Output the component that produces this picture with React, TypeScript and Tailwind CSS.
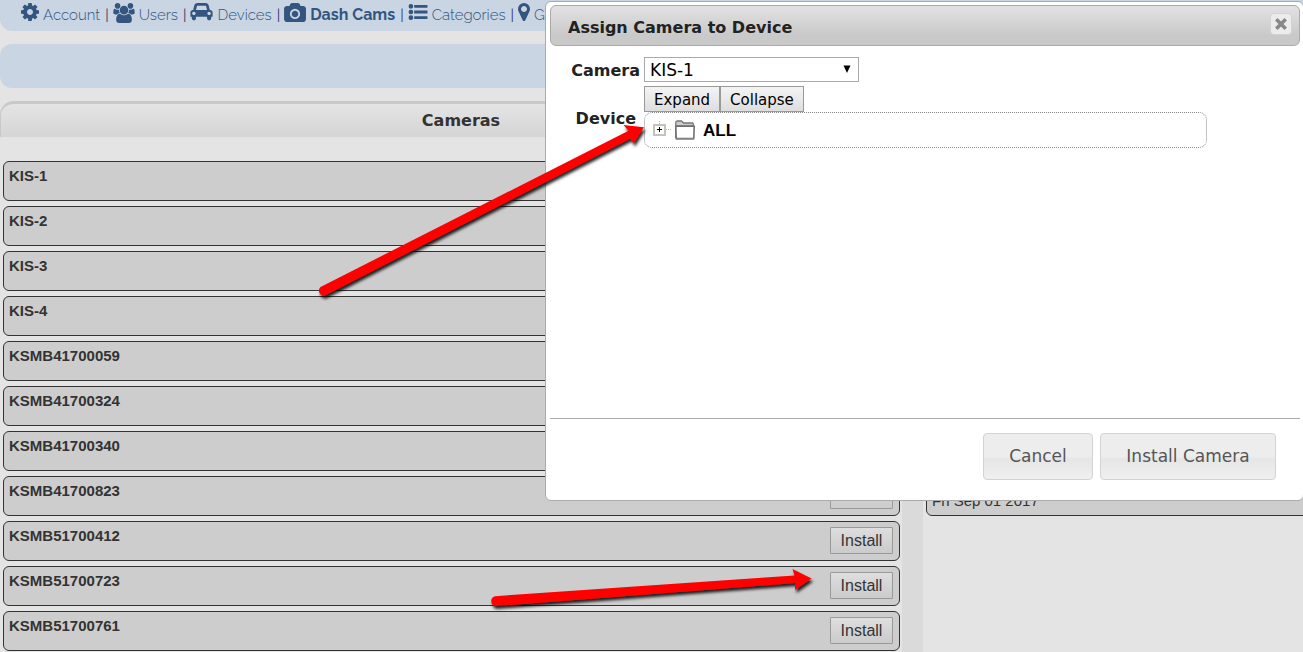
import React from "react";

type IconProps = { box: string; className: string; d: string };

function Icon({ box, className, d }: IconProps) {
  return (
    <svg viewBox={box} className={className} fill="currentColor" aria-hidden="true">
      <path d={d} />
    </svg>
  );
}

const COG =
  "M1152 896q0-106-75-181t-181-75-181 75-75 181 75 181 181 75 181-75 75-181zm512-109v222q0 12-8 23t-20 13l-185 28q-19 54-39 91 35 50 107 138 10 12 10 25t-9 23q-27 37-99 108t-94 71q-12 0-26-9l-138-108q-44 23-91 38-16 136-29 186-7 28-36 28h-222q-14 0-24.5-8.5t-11.5-21.5l-28-184q-49-16-90-37l-141 107q-10 9-25 9-14 0-25-11-126-114-165-168-7-10-7-23 0-12 8-23 15-21 51-66.5t54-70.5q-27-50-41-99l-183-27q-13-2-21-12.5t-8-23.5v-222q0-12 8-23t19-13l186-28q14-46 39-92-40-57-107-138-10-12-10-24 0-10 9-23 26-36 98.5-107.5t94.5-71.5q13 0 26 10l138 107q44-23 91-38 16-136 29-186 7-28 36-28h222q14 0 24.5 8.5t11.5 21.5l28 184q49 16 90 37l142-107q9-9 24-9 13 0 25 10 129 119 165 170 7 8 7 22 0 12-8 23-15 21-51 66.5t-54 70.5q26 50 41 98l183 28q13 2 21 12.5t8 23.5z";
const USERS =
  "M529 896q-162 5-265 128h-134q-82 0-138-40.5t-56-118.5q0-353 124-353 6 0 43.5 21t97.5 42.5 119 21.5q67 0 133-23-5 37-5 66 0 143 81 256zm1071 637q0 120-73 189.5t-194 69.5h-874q-121 0-194-69.5t-73-189.5q0-53 3.5-103.5t14-109 26.5-108.5 43-97.5 62-81 85.5-53.5 111.5-20q10 0 43 21.5t73 48 107 48 135 21.5 135-21.5 107-48 73-48 43-21.5q61 0 111.5 20t85.5 53.5 62 81 43 97.5 26.5 108.5 14 109 3.5 103.5zm-1024-1277q0 106-75 181t-181 75-181-75-75-181 75-181 181-75 181 75 75 181zm704 384q0 159-112.5 271.5t-271.5 112.5-271.5-112.5-112.5-271.5 112.5-271.5 271.5-112.5 271.5 112.5 112.5 271.5zm576 225q0 78-56 118.5t-138 40.5h-134q-103-123-265-128 81-113 81-256 0-29-5-66 66 23 133 23 59 0 119-21.5t97.5-42.5 43.5-21q124 0 124 353zm-128-609q0 106-75 181t-181 75-181-75-75-181 75-181 181-75 181 75 75 181z";
const CAR =
  "M480 1088q0-66-47-113t-113-47-113 47-47 113 47 113 113 47 113-47 47-113zm36-320h1016l-89-357q-2-8-14-17.5t-21-9.5h-768q-9 0-21 9.5t-14 17.5zm1372 320q0-66-47-113t-113-47-113 47-47 113 47 113 113 47 113-47 47-113zm160-96v384q0 14-9 23t-23 9h-96v128q0 80-56 136t-136 56-136-56-56-136v-128h-1024v128q0 80-56 136t-136 56-136-56-56-136v-128h-96q-14 0-23-9t-9-23v-384q0-93 65.5-158.5t158.5-65.5h28l105-419q23-94 104-157.5t179-63.5h768q98 0 179 63.5t104 157.5l105 419h28q93 0 158.5 65.5t65.5 158.5z";
const CAMERA =
  "M896 672q119 0 203.5 84.5t84.5 203.5-84.5 203.5-203.5 84.5-203.5-84.5-84.5-203.5 84.5-203.5 203.5-84.5zm704-416q106 0 181 75t75 181v896q0 106-75 181t-181 75h-1408q-106 0-181-75t-75-181v-896q0-106 75-181t181-75h224l51-136q19-49 69.5-84.5t103.5-35.5h512q53 0 103.5 35.5t69.5 84.5l51 136h224zm-704 1152q185 0 316.5-131.5t131.5-316.5-131.5-316.5-316.5-131.5-316.5 131.5-131.5 316.5 131.5 316.5 316.5 131.5z";
const LIST =
  "M0 3.5a2.5 2.5 0 1 1 5 0a2.5 2.5 0 1 1-5 0zM0 9.500a2.500 2.500 0 1 1 5 0a2.500 2.500 0 1 1-5 0zM0 15.500a2.500 2.500 0 1 1 5 0a2.500 2.500 0 1 1-5 0zM6 2h14v3h-14zM6 8h14v3h-14zM6 14h14v3h-14z";
const PIN =
  "M1152 640q0-106-75-181t-181-75-181 75-75 181 75 181 181 75 181-75 75-181zm256 0q0 109-33 179l-364 774q-16 33-47.5 52t-67.5 19-67.5-19-46.5-52l-365-774q-33-70-33-179 0-212 150-362t362-150 362 150 150 362z";

const NAV = [
  { label: "Account", box: "128 128 1536 1536", size: "h-[18px] w-[18px]", d: COG },
  { label: "Users", box: "-64 0 1920 1792", size: "h-5 w-[22px]", d: USERS },
  { label: "Devices", box: "0 128 2048 1664", size: "h-[18px] w-[23px]", d: CAR },
  { label: "Dash Cams", box: "-64 0 1920 1664", size: "h-[19px] w-[22px]", d: CAMERA, active: true },
  { label: "Categories", box: "0 0 20 19", size: "h-[18px] w-5", d: LIST },
  { label: "Geo", box: "384 128 1024 1536", size: "h-[18px] w-3", d: PIN },
];

const CAMERAS = [
  "KIS-1",
  "KIS-2",
  "KIS-3",
  "KIS-4",
  "KSMB41700059",
  "KSMB41700324",
  "KSMB41700340",
  "KSMB41700823",
  "KSMB51700412",
  "KSMB51700723",
  "KSMB51700761",
];

function PanelHeader({ children }: { children?: React.ReactNode }) {
  return (
    <h2 className="h-9 rounded-t-[14px] border-x border-t-[3px] border-[#c9c9c9] bg-linear-to-b from-[#e4e4e4] to-[#d5d5d5] text-center font-['DejaVu_Sans',sans-serif] text-base leading-[34px] font-bold text-[#333]">
      {children}
    </h2>
  );
}

function CameraRow({ name }: { name: string }) {
  return (
    <li className="flex h-10 items-start justify-between rounded-md border border-[#333] bg-[#cdcdcd] pt-[5px] pr-1.5 pl-[5px]">
      <span className="text-[15px] leading-[18px] font-bold text-[#333]">{name}</span>
      <button
        type="button"
        className="h-[27px] w-[63px] rounded-[1px] border border-[#999] bg-linear-to-b from-[#dedede] to-[#cbcbcb] text-base leading-6 text-[#333]"
      >
        Install
      </button>
    </li>
  );
}

function AssignDialog() {
  const dialogButton =
    "h-[47px] rounded border border-[#d3d3d3] bg-linear-to-b from-[#ededed] from-50% via-[#e6e6e6] via-55% to-[#f0f0f0] text-[17px] text-[#555]";
  const treeButton =
    "h-[26px] border border-[#999] bg-linear-to-b from-[#f4f4f4] to-[#dedede] px-[9px] pt-0.5 text-[15px] leading-[22px] text-black";
  return (
    <section
      role="dialog"
      aria-labelledby="dialog-title"
      className="absolute top-px -right-px flex h-[500px] w-[759px] flex-col rounded-md border border-[#aaa] bg-white px-1 pt-[3px] font-['DejaVu_Sans',sans-serif] text-[#222]"
    >
      <header className="-mr-px flex h-[41px] shrink-0 items-center justify-between rounded-md border border-[#aaa] bg-linear-to-b from-[#e2e2e2] to-[#c9c9c9] to-75% pr-[7px] pl-[17px]">
        <h1 id="dialog-title" className="pt-1 text-base font-bold">
          Assign Camera to Device
        </h1>
        <button
          type="button"
          aria-label="Close"
          className="mb-[3px] flex size-[22px] items-center justify-center rounded border border-[#d3d3d3] bg-[#ececec]"
        >
          <svg viewBox="0 0 12 12" className="size-3" stroke="#888" strokeWidth="3.6" aria-hidden="true">
            <path d="M1.300 1.300L10.700 10.700M10.700 1.300L1.300 10.700" />
          </svg>
        </button>
      </header>

      <form className="grid grow grid-cols-[94px_1fr] content-start pt-[11px] pr-[92px]">
        <label htmlFor="camera" className="pr-1 text-right text-base leading-7 font-bold">
          Camera
        </label>
        <div className="relative mb-px h-7 w-[215px]">
          <select
            id="camera"
            className="h-[25px] w-full appearance-none border border-[#a9a9a9] bg-white px-[5px] pt-px text-[17px] leading-[22px] text-black"
          >
            <option>KIS-1</option>
          </select>
          <svg viewBox="0 0 8 8" className="pointer-events-none absolute top-2 right-2 size-2" aria-hidden="true">
            <path d="M.5 .5h7L4 8z" fill="#000" />
          </svg>
        </div>
        <span id="device-label" className="pt-[22px] pr-2 text-right text-base leading-[22px] font-bold">
          Device
        </span>
        <div>
          <div className="flex">
            <button type="button" className={treeButton}>
              Expand
            </button>
            <button type="button" className={treeButton}>
              Collapse
            </button>
          </div>
          <ul
            aria-labelledby="device-label"
            className="h-9 rounded-lg border border-dotted border-[#888] pl-2 font-['Liberation_Sans',Arial,sans-serif]"
          >
            <li className="flex h-[34px] items-center text-[17px] font-bold text-black">
              <svg viewBox="0 0 18 18" className="h-[18px] w-[18px]" fill="none" shapeRendering="crispEdges" aria-hidden="true">
                <path d="M6.500 0v3M13 8.500h5" stroke="#b5b5a5" strokeDasharray="1 1" />
                <path d="M1 3.500h11v10.500h-11z" stroke="#c4c4b8" strokeWidth="2" />
                <path d="M4 8.500h5M6.500 6v5" stroke="#000" />
              </svg>
              <svg viewBox="0 0 20 20" className="mr-2 ml-1 size-5" fill="none" aria-hidden="true">
                <path d="M.8 18V2.500Q.8 1 2.300 1H6.500L8.500 3H17.500Q18.500 3 18.500 6H.8" fill="#ccc" stroke="#777" strokeWidth="1.300" />
                <path d="M.8 6.200H19.200L18.800 18.500H1.200z" fill="#fff" stroke="#707070" strokeWidth="1.600" />
                <path d="M1 19h18" stroke="#888" strokeWidth="1.500" />
              </svg>
              <span className="pt-0.5">ALL</span>
            </li>
          </ul>
        </div>
      </form>

      <footer className="-mr-px flex h-[82px] shrink-0 justify-end gap-[7px] border-t border-[#aaa] pt-3.5 pr-6">
        <button type="button" className={`${dialogButton} w-[110px]`}>
          Cancel
        </button>
        <button type="button" className={`${dialogButton} w-44`}>
          Install Camera
        </button>
      </footer>
    </section>
  );
}

function Arrows() {
  return (
    <svg
      viewBox="0 0 1303 652"
      className="pointer-events-none absolute top-0 right-0 h-[652px] w-[1303px]"
      fill="#f00"
      aria-hidden="true"
    >
      <defs>
        <filter id="shadow" x="-10%" y="-30%" width="120%" height="180%">
          <feDropShadow dx="1.500" dy="3" stdDeviation="1.500" floodColor="#000" floodOpacity="0.85" />
        </filter>
      </defs>
      <g filter="url(#shadow)">
        <path d="M320.500 287L628.500 130.700L623.500 125L644 127.300L633.500 143.500L630.500 138.500L325 295.500A5 5 0 0 1 320.500 287z" />
        <path d="M495 596.200L794.500 575.500L792.500 569L811.500 578.500L795 590L795 583L495.500 606A5 5 0 0 1 495 596.200z" />
      </g>
    </svg>
  );
}

export default function App() {
  return (
    <div className="relative flex h-screen flex-col overflow-hidden bg-[#e4e4e4] font-['Liberation_Sans',Arial,sans-serif]">
      <nav className="flex h-[31px] shrink-0 items-start overflow-hidden rounded-bl-xl bg-[#c9d5e3] pt-1 pl-[21px] font-['Raleway','Lato',sans-serif] text-[15px] leading-[22px] text-[#33557f]">
        {NAV.map((item, i) => (
          <React.Fragment key={item.label}>
            {i > 0 && <span className="pr-1 pl-[5px] text-[#333366]">|</span>}
            <a href="#" className="flex shrink-0 items-start gap-1">
              <Icon box={item.box} className={`-mt-px shrink-0 ${item.size}`} d={item.d} />
              <span className={item.active ? "text-base leading-[22px] font-bold" : "font-light"}>{item.label}</span>
            </a>
          </React.Fragment>
        ))}
      </nav>
      <div className="mt-[13px] h-11 shrink-0 rounded-l-xl bg-[#c9d5e3]" />

      <main className="grid grow grid-cols-[902fr_21px_380fr]">
        <section className="pt-[13px]">
          <PanelHeader>
            <span className="pl-5">Cameras</span>
          </PanelHeader>
          <ul className="mt-6 flex flex-col gap-[5px] pr-0.5 pl-[3px]">
            {CAMERAS.map((name) => (
              <CameraRow key={name} name={name} />
            ))}
          </ul>
        </section>
        <div className="bg-[#dadada]" />
        <section className="pt-[13px] pl-[3px]">
          <PanelHeader />
          <div className="-mr-2 mt-6 flex h-[355px] items-end rounded-md border border-[#333] bg-[#cdcdcd] pb-1 pl-[5px] text-[15px] leading-5 text-[#333]">
            Fri Sep 01 2017
          </div>
        </section>
      </main>

      <AssignDialog />
      <Arrows />
    </div>
  );
}
